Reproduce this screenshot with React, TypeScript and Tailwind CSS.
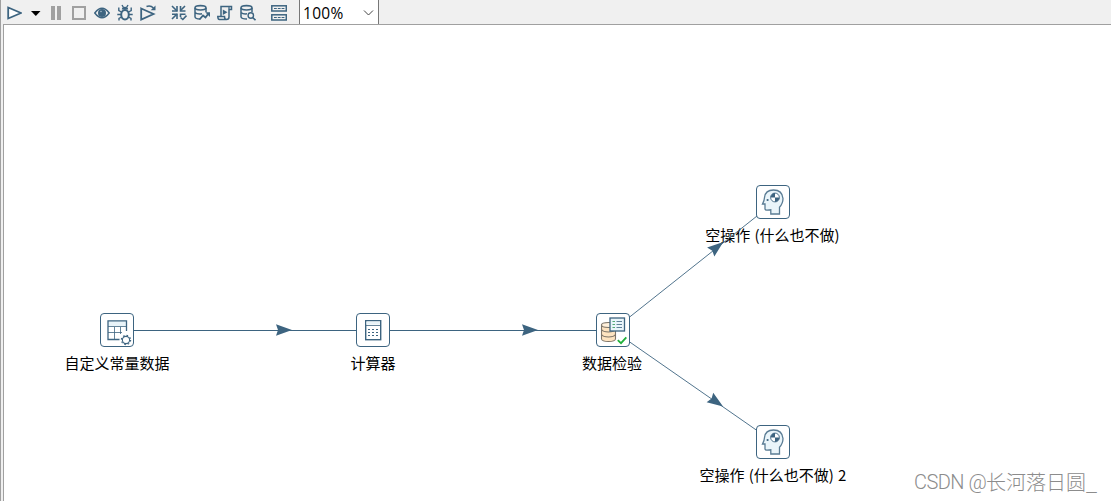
import type { ReactNode } from "react";

const INK = "#3d6480";

function Tool({ children, w = 16 }: { children: ReactNode; w?: number }) {
  return (
    <svg
      width={w}
      height={24}
      viewBox={`0 0 ${w} 24`}
      fill="none"
      stroke={INK}
      strokeWidth={1.6}
      className="block shrink-0"
    >
      {children}
    </svg>
  );
}

function Toolbar() {
  return (
    <div className="flex h-6 shrink-0 items-start bg-[#f0f0f0] pl-[5px]">
      <div className="flex gap-[7px]">
        <Tool>
          <path d="M2.2 7.5 L15 13 L2.2 18.5 Z" strokeWidth={1.8} fill="#fff" />
        </Tool>
        <Tool w={12}>
          <path d="M2 11 H11.5 L6.8 16 Z" fill="#000" stroke="none" />
        </Tool>
        <Tool>
          <path d="M3 6 H7 V20 H3 Z M9 6 H13 V20 H9 Z" fill="#a0a0a0" stroke="none" />
        </Tool>
        <Tool>
          <rect x={2} y={7} width={12} height={12} stroke="#a0a0a0" strokeWidth={2} />
        </Tool>
        <Tool>
          <path d="M0.8 13 Q8 3.5 15.2 13 Q8 22.5 0.8 13 Z" strokeWidth={1.5} />
          <circle cx={8} cy={13} r={4} fill={INK} stroke="none" />
          <circle cx={7} cy={11.5} r={0.8} fill="#a9bdca" stroke="none" />
        </Tool>
        <Tool>
          <ellipse cx={8} cy={14.8} rx={3.8} ry={4.7} strokeWidth={2} />
          <path d="M4.8 9.5 Q5 6.7 8 6.7 Q11 6.7 11.2 9.5 Z" fill={INK} stroke="none" />
          <path d="M5 5 L6.5 7.5 M11 5 L9.5 7.5 M4.5 12 L1.8 10.5 V7.5 M11.5 12 L14.2 10.5 V7.5 M4 14.5 H0.3 M12 14.5 H15.7 M4.5 17 L2 18.3 V20.5 M11.5 17 L14 18.3 V20.5" strokeWidth={1.4} />
        </Tool>
        <Tool>
          <path d="M1.2 8.5 L13.5 14 L1.2 19.5 Z" strokeWidth={1.8} />
          <path d="M6.5 6.5 Q10.5 5 13.5 8" strokeWidth={1.5} />
          <path d="M15.5 5.5 V10.3 H10.7 Z" fill={INK} stroke="none" />
        </Tool>
      </div>
      <div className="ml-[15px] flex gap-[7px]">
        <Tool>
          <path d="M1 6 L6 11 M14 6 L9.5 10.5 M1 19 L6 14" strokeWidth={1.6} />
          <path d="M6 6 V11 H1 M9.5 6 V11 H14.5 M1 14.2 H6 V19 M14.5 14.2 H9.5 V17" strokeWidth={1.6} />
          <path d="M9.5 17.5 L11.8 19.5 L15.5 15.5" strokeWidth={1.6} />
        </Tool>
        <Tool>
          <ellipse cx={6.5} cy={7.8} rx={5.5} ry={2.2} />
          <path d="M1 8 V16.8 Q1.5 19 6 19 M12 8 V12 M1 12.5 Q3 14.5 8 13.8" strokeWidth={1.5} />
          <path d="M5.5 19.5 L9 15.5 L11.5 17.5 L14.5 13.5" strokeWidth={1.8} />
          <path d="M11.2 12.2 H16 V17 Z" fill={INK} stroke="none" />
        </Tool>
        <Tool>
          <path d="M4 16 V6.5 H14.5 V9.5 H12 V17 Q12 19.5 9.5 19.5 H2.5 Q0.8 19.3 0.8 16.5 H7.5 Q7.5 19.5 9.5 19.5" strokeWidth={1.5} />
          <path d="M12 9 V7" strokeWidth={1.2} />
          <path d="M5.8 9.5 L10.5 12.2 L5.8 14.9 Z" fill={INK} stroke="none" />
        </Tool>
        <Tool>
          <ellipse cx={6.5} cy={7.8} rx={5.5} ry={2.2} />
          <path d="M1 8 V16.8 Q1.5 19 7 19 M12 8 V12 M1 12.5 Q3 14.3 7 13.8" strokeWidth={1.5} />
          <circle cx={10.8} cy={15.5} r={2.7} strokeWidth={1.4} />
          <path d="M12.6 17.5 L15.5 20.2" strokeWidth={1.7} />
        </Tool>
      </div>
      <div className="ml-[15px] flex">
        <Tool>
          <rect x={0.8} y={5.8} width={14.5} height={5.2} strokeWidth={1.5} />
          <rect x={0.8} y={14.8} width={14.5} height={5.2} strokeWidth={1.5} />
          <path d="M3 8.5 H13.5 M3 17.5 H13.5" strokeWidth={1.2} strokeDasharray="2.8 1" />
        </Tool>
      </div>
      <div className="ml-3 flex h-6 w-20 items-center justify-between border-x border-[#777] bg-white pt-0.5 pr-1 pl-[3px]">
        <span className="font-['Open_Sans','Noto_Sans',sans-serif] text-[15.5px] leading-[22px] tracking-[0.3px] text-black">
          100%
        </span>
        <svg width={11} height={8} viewBox="0 0 11 8" fill="none" stroke="#444" strokeWidth={1}>
          <path d="M1 1.5 L5.5 6 L10 1.5" />
        </svg>
      </div>
    </div>
  );
}

function TableIcon() {
  return (
    <g>
      <rect x={8} y={8} width={19} height={5} fill="#e8f3f8" stroke="none" />
      <path d="M26.5 18 V7.8 H8 V26.5 H19.5" strokeWidth={1.3} />
      <path d="M8 13.5 H27 M8 19.5 H22 M14.5 14 V26 M20.5 14 V21" strokeWidth={0.8} />
      <circle cx={26} cy={27} r={3.6} strokeWidth={1.1} fill="#fff" />
      <circle cx={26} cy={27} r={4.6} strokeWidth={1.2} strokeDasharray="1.6 2.01" />
    </g>
  );
}

function CalculatorIcon() {
  return (
    <g>
      <rect x={9.7} y={7.7} width={15} height={19} strokeWidth={1.4} />
      <rect x={10.5} y={8.5} width={13.5} height={3} fill="#e8f3f8" stroke="none" />
      <path d="M10 12.5 H24.5" strokeWidth={0.8} />
      <path d="M12 16.5 H23 M12 19.5 H23 M12 22.5 H23" strokeWidth={1} strokeDasharray="2 2" />
    </g>
  );
}

function ValidatorIcon() {
  return (
    <g>
      <path d="M5.5 12 V26 Q6 28.5 12.5 28.5 Q19 28.5 19.5 26 V12 Z" fill="#fde3c0" stroke="#7d7468" strokeWidth={1.1} />
      <ellipse cx={12.5} cy={12} rx={7} ry={2.5} fill="#fff0db" stroke="#7d7468" strokeWidth={1.1} />
      <path d="M5.5 16.5 Q7 19 12.5 19 Q18 19 19.5 16.5 M5.5 21.5 Q7 24 12.5 24 Q18 24 19.5 21.5" stroke="#7d7468" strokeWidth={1.1} />
      <rect x={14} y={5} width={14.5} height={13} fill="#eaf5fa" strokeWidth={1.3} />
      <path d="M16.5 8.5 H19 M16.5 11.5 H19 M16.5 14.5 H19" stroke="#54a976" strokeWidth={1.1} />
      <path d="M20.5 8.5 H26 M20.5 11.5 H26 M20.5 14.5 H26" strokeWidth={0.8} />
      <path d="M21.8 27.2 L25 30.2 L30.3 24.3" stroke="#fff" strokeWidth={4} />
      <path d="M21.8 27.2 L25 30.2 L30.3 24.3" stroke="#20b13b" strokeWidth={1.8} />
    </g>
  );
}

function HeadIcon() {
  return (
    <g>
      <path
        d="M23.5 29 V22.2 Q27 18.5 27 13.5 C26.5 8 23 5 17.5 5 C12 5 9 8 8.5 12.5 C8.5 15 7.5 17 6.5 19 H9 V24 Q9.3 25.3 11 25.2 L14.8 24.8 V29 Z"
        fill="#eaf5fa"
        stroke="#5a7c94"
        strokeWidth={1.3}
      />
      <circle cx={19} cy={12.5} r={4.4} fill="#fff" strokeWidth={0.9} />
      <path d="M19 12.5 H14.6 A4.4 4.4 0 0 1 19 8.1 Z M19 12.5 H23.4 A4.4 4.4 0 0 1 19 16.9 Z" fill={INK} stroke="none" />
      <circle cx={11.6} cy={15} r={1.1} fill={INK} stroke="none" />
    </g>
  );
}

interface StepProps {
  place: string;
  label: string;
  labelClass?: string;
  children: ReactNode;
}

function Step({ place, label, labelClass = "", children }: StepProps) {
  return (
    <div className={`absolute flex w-[34px] flex-col items-center ${place}`}>
      <svg width={34} height={34} viewBox="0 0 34 34" fill="none" stroke={INK} className="block shrink-0">
        <rect x={0.5} y={0.5} width={33} height={33} rx={3.5} fill="#fff" />
        {children}
      </svg>
      <span
        className={`mt-[5px] font-['Noto_Sans_CJK_SC',sans-serif] text-[15px] leading-[22px] whitespace-nowrap text-black ${labelClass}`}
      >
        {label}
      </span>
    </div>
  );
}

const ARROW = "M8 0 L-8 -5.8 L-6 0 L-8 5.8 Z";

function Hops() {
  return (
    <svg
      width={1107}
      height={476}
      viewBox="4 25 1107 476"
      className="pointer-events-none absolute top-0 left-0"
      fill="none"
      stroke={INK}
    >
      <path d="M133 330.5 H357 M389 330.5 H597" strokeWidth={1} />
      <path d="M629 317.5 L757 216 M629 341.5 L757 430.5" strokeWidth={0.9} />
      <g fill={INK} stroke="none">
        <path d={ARROW} transform="translate(284 330)" />
        <path d={ARROW} transform="translate(530 330)" />
        <path d={ARROW} transform="translate(717 247) rotate(-38.4)" />
        <path d={ARROW} transform="translate(716.5 402) rotate(34.8)" />
      </g>
    </svg>
  );
}

export default function App() {
  return (
    <div className="flex h-[501px] w-[1111px] flex-col overflow-hidden border-l border-[#a0a0a0] bg-[#f0f0f0]">
      <Toolbar />
      <main className="relative ml-0.5 flex-1 overflow-hidden border-t border-l border-[#a0a0a0] bg-white">
        <Step place="left-24 top-[288px]" label="自定义常量数据">
          <TableIcon />
        </Step>
        <Step place="left-[352px] top-[288px]" label="计算器">
          <CalculatorIcon />
        </Step>
        <Step place="left-[592px] top-[288px]" label="数据检验" labelClass="mr-0.5">
          <ValidatorIcon />
        </Step>
        <Step place="left-[752px] top-40" label="空操作 (什么也不做)" labelClass="mr-px [word-spacing:0.8px]">
          <HeadIcon />
        </Step>
        <Step place="left-[752px] top-[400px]" label="空操作 (什么也不做) 2" labelClass="[word-spacing:0.8px]">
          <HeadIcon />
        </Step>
        <Hops />
        <div className="absolute right-[14px] bottom-1 flex text-xl leading-[30px] font-light whitespace-nowrap text-[#8c8c8c]">
          <span className="w-[72px] font-['Roboto',sans-serif] tracking-[-0.5px]">CSDN @</span>
          <span className="font-['Noto_Sans_CJK_SC',sans-serif]">长河落日圆_</span>
        </div>
      </main>
    </div>
  );
}
